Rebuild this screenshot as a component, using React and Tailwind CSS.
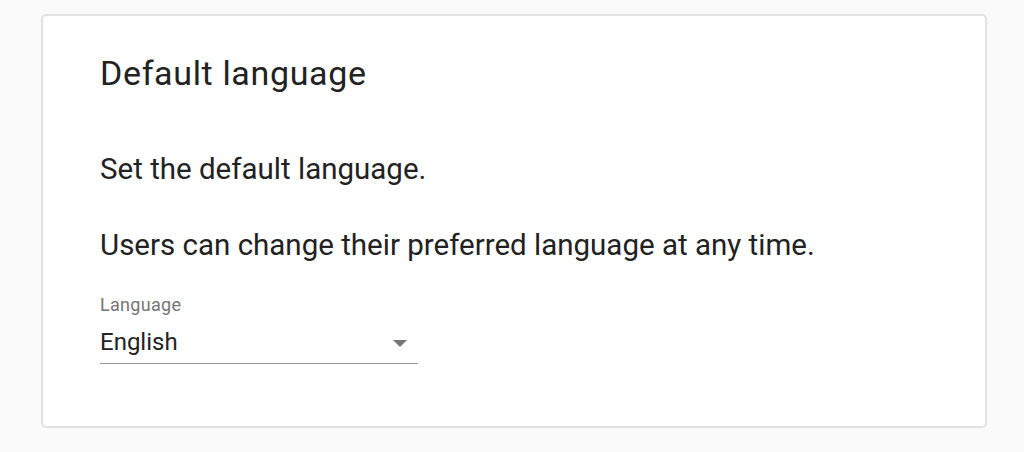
export default function App() {
  return (
    <div className="min-h-[452px] w-[1024px] bg-[#fafafa] pt-[14px] pl-[41px] font-['Roboto',sans-serif]">
      <div className="w-[946px] h-[414px] rounded-[5px] border-2 border-[#e2e2e2] bg-white pl-[57px] pt-[37px]">
        <h2 className="text-[34px] leading-[40px] tracking-[0.65px] text-[#222]">Default language</h2>
        <p className="mt-[58px] text-[29.5px] leading-[36px] text-[#222]">Set the default language.</p>
        <p className="mt-[40px] text-[29.5px] leading-[36px] text-[#222]">Users can change their preferred language at any time.</p>
        <div className="mt-[31px] w-[318px]">
          <div className="text-[18px] leading-[22px] tracking-[0.3px] text-[#757575]">Language</div>
          <div className="mt-[12px] flex items-center justify-between pb-[7px] border-b border-[#999]">
            <span className="text-[24px] leading-[28px] text-[#222]">English</span>
            <svg width="14" height="7" viewBox="0 0 14 7" className="mr-[11px] mt-[2px]">
              <path d="M0 0 L14 0 L7 7 Z" fill="#757575" />
            </svg>
          </div>
        </div>
      </div>
    </div>
  );
}
